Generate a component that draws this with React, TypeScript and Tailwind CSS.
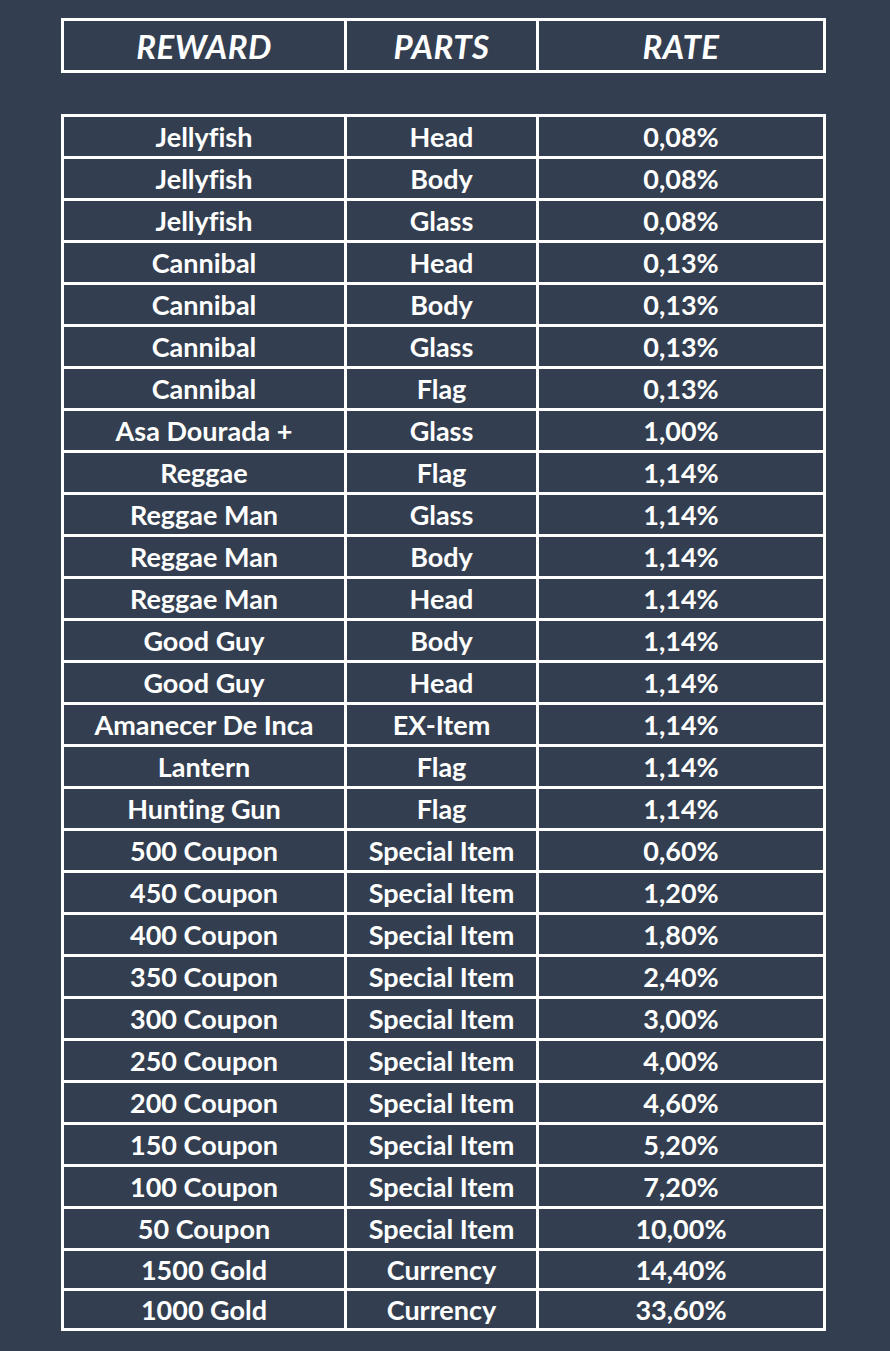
import React from "react";

type Row = { reward: string; part: string; rate: string; short?: boolean };

const rows: Row[] = [
    { reward: "Jellyfish", part: "Head", rate: "0,08%" },
    { reward: "Jellyfish", part: "Body", rate: "0,08%" },
    { reward: "Jellyfish", part: "Glass", rate: "0,08%" },
    { reward: "Cannibal", part: "Head", rate: "0,13%" },
    { reward: "Cannibal", part: "Body", rate: "0,13%" },
    { reward: "Cannibal", part: "Glass", rate: "0,13%" },
    { reward: "Cannibal", part: "Flag", rate: "0,13%" },
    { reward: "Asa Dourada +", part: "Glass", rate: "1,00%" },
    { reward: "Reggae", part: "Flag", rate: "1,14%" },
    { reward: "Reggae Man", part: "Glass", rate: "1,14%" },
    { reward: "Reggae Man", part: "Body", rate: "1,14%" },
    { reward: "Reggae Man", part: "Head", rate: "1,14%" },
    { reward: "Good Guy", part: "Body", rate: "1,14%" },
    { reward: "Good Guy", part: "Head", rate: "1,14%" },
    { reward: "Amanecer De Inca", part: "EX-Item", rate: "1,14%" },
    { reward: "Lantern", part: "Flag", rate: "1,14%" },
    { reward: "Hunting Gun", part: "Flag", rate: "1,14%" },
    { reward: "500 Coupon", part: "Special Item", rate: "0,60%" },
    { reward: "450 Coupon", part: "Special Item", rate: "1,20%" },
    { reward: "400 Coupon", part: "Special Item", rate: "1,80%" },
    { reward: "350 Coupon", part: "Special Item", rate: "2,40%" },
    { reward: "300 Coupon", part: "Special Item", rate: "3,00%" },
    { reward: "250 Coupon", part: "Special Item", rate: "4,00%" },
    { reward: "200 Coupon", part: "Special Item", rate: "4,60%" },
    { reward: "150 Coupon", part: "Special Item", rate: "5,20%" },
    { reward: "100 Coupon", part: "Special Item", rate: "7,20%" },
    { reward: "50 Coupon", part: "Special Item", rate: "10,00%" },
    { reward: "1500 Gold", part: "Currency", rate: "14,40%", short: true },
    { reward: "1000 Gold", part: "Currency", rate: "33,60%", short: true },
];

const cell = "flex items-center justify-center border-r-[3px] border-b-[3px] border-white";

export default function App() {
    return (
        <div
            className="w-[890px] h-[1351px] bg-[#333f50] pl-[61px] pt-[18px] text-white font-bold [font-variant-ligatures:none]"
            style={{ fontFamily: "Lato, 'Open Sans', sans-serif" }}
        >
            {/* header */}
            <div className="w-[765px] border-l-[3px] border-t-[3px] border-white flex h-[55px] italic text-[33px] tracking-[0.5px]">
                <div className={`${cell} w-[283px] pt-[3px]`}>REWARD</div>
                <div className={`${cell} w-[192px] pt-[3px]`}>PARTS</div>
                <div className={`${cell} w-[287px] pt-[3px]`}>RATE</div>
            </div>

            {/* rows */}
            <div className="mt-[41px] w-[765px] border-l-[3px] border-t-[3px] border-white text-[27px]">
                {rows.map((r, i) => (
                    <div key={i} className={`flex ${r.short ? "h-[40px]" : "h-[42px]"}`}>
                        <div className={`${cell} w-[283px] pt-[2px]`}>{r.reward}</div>
                        <div className={`${cell} w-[192px] pt-[2px]`}>{r.part}</div>
                        <div className={`${cell} w-[287px] pt-[2px]`}>{r.rate}</div>
                    </div>
                ))}
            </div>
        </div>
    );
}
